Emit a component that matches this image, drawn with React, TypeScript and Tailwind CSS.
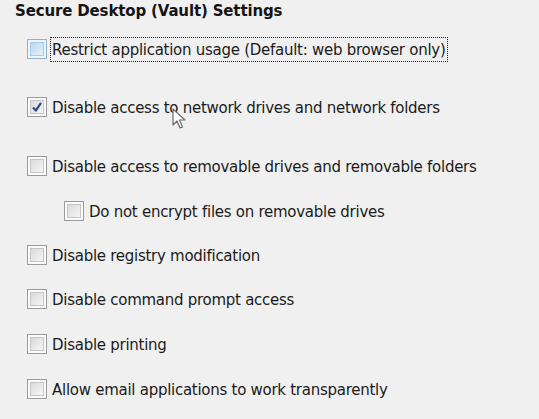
import React from "react";

type Row = {
  label: string;
  checked?: boolean;
  hover?: boolean;
  focus?: boolean;
  indent?: boolean;
  mt: string;
};

const rows: Row[] = [
  { label: "Restrict application usage (Default: web browser only)", hover: true, focus: true, mt: "mt-[15px]" },
  { label: "Disable access to network drives and network folders", checked: true, mt: "mt-[34px]" },
  { label: "Disable access to removable drives and removable folders", mt: "mt-[35px]" },
  { label: "Do not encrypt files on removable drives", indent: true, mt: "mt-[21px]" },
  { label: "Disable registry modification", mt: "mt-[20px]" },
  { label: "Disable command prompt access", mt: "mt-[20px]" },
  { label: "Disable printing", mt: "mt-[21px]" },
  { label: "Allow email applications to work transparently", mt: "mt-[21px]" },
];

function CheckBox({ checked, hover }: { checked?: boolean; hover?: boolean }) {
  return (
    <div
      className={
        hover
          ? "w-5 h-5 shrink-0 border border-[#8fb2cf] bg-[#eef6fc] p-[2px]"
          : "w-5 h-5 shrink-0 border border-[#9a9a9a] bg-[#fbfbfb] p-[2px]"
      }
    >
      <div
        className={
          hover
            ? "w-full h-full border border-[#a9cbe8] bg-gradient-to-br from-[#b9d9f3] to-[#e4f1fb] flex items-center justify-center"
            : "w-full h-full border border-[#c4c4c4] bg-gradient-to-br from-[#dadada] to-[#f6f6f6] flex items-center justify-center"
        }
      >
        {checked && (
          <svg width="12" height="12" viewBox="0 0 12 12">
            <path d="M2 6.5 L4.8 9.6 L10 1.8" fill="none" stroke="#34497d" strokeWidth="2.2" strokeLinejoin="round" />
          </svg>
        )}
      </div>
    </div>
  );
}

export default function App() {
  return (
    <div
      className="relative w-[539px] h-[419px] overflow-hidden bg-[#f0f0f0] text-[#1b1b1b]"
      style={{ fontFamily: '"DejaVu Sans", Verdana, sans-serif' }}
    >
      <div className="pl-[15px] pt-[1px] h-[22px] text-[15px] leading-[20px] font-bold tracking-[-0.15px] text-[#141414]">
        Secure Desktop (Vault) Settings
      </div>

      <div className="flex flex-col">
        {rows.map((r, i) => (
          <div
            key={i}
            className={`${r.mt} ${r.indent ? "pl-[64px]" : "pl-[27px]"} flex items-center gap-[4px] h-6`}
          >
            <CheckBox checked={r.checked} hover={r.hover} />
            <span
              className={
                r.focus
                  ? "px-[1px] pt-[1px] text-[15px] leading-[22px] tracking-[-0.27px] outline-1 outline-dotted outline-[#222] outline-offset-[0px]"
                  : "px-[1px] pt-[2px] text-[15px] leading-[20px] tracking-[-0.27px]"
              }
            >
              {r.label}
            </span>
          </div>
        ))}
      </div>

      {/* mouse pointer */}
      <svg className="absolute left-[172px] top-[108px]" width="14" height="22" viewBox="0 0 14 22">
        <path
          d="M1 1 L1 17 L5 13 L8 20 L10.5 19 L7.5 12 L13 12 Z"
          fill="#ffffff"
          stroke="#6b6b6b"
          strokeWidth="1.2"
          strokeLinejoin="round"
        />
      </svg>
    </div>
  );
}
